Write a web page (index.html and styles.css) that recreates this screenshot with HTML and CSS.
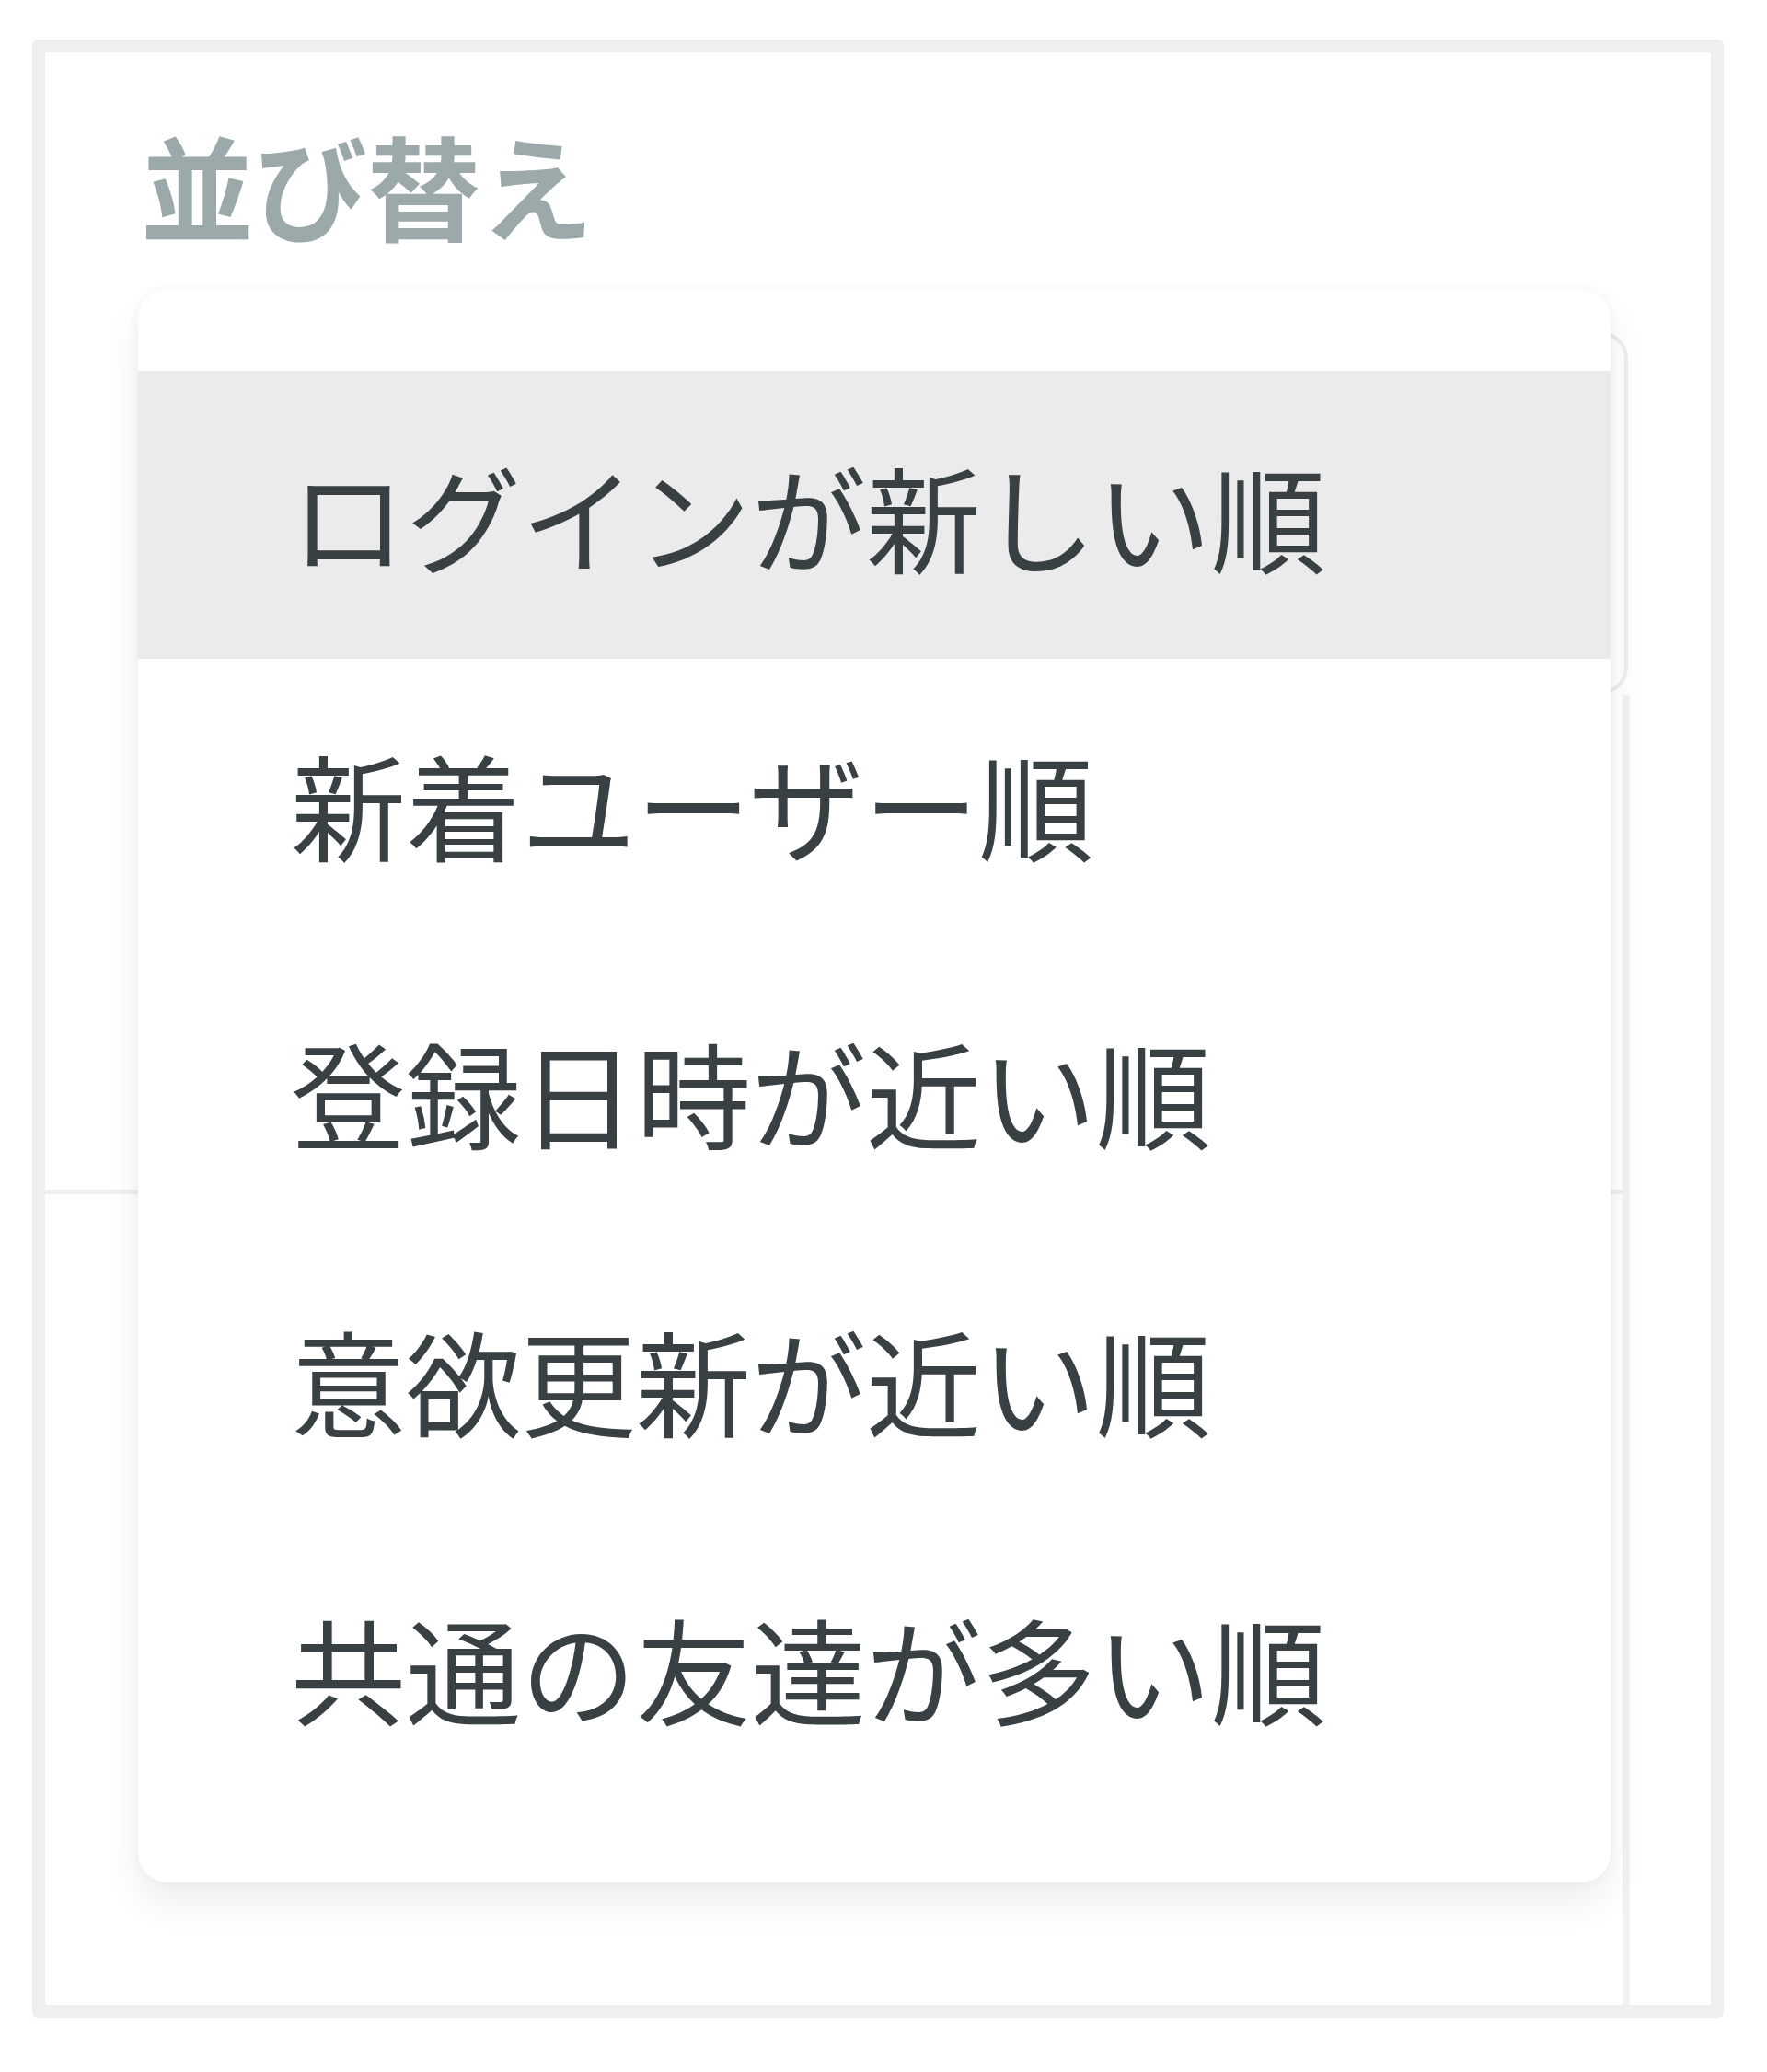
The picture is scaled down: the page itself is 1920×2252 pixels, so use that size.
FILE: index.html
```html
<!DOCTYPE html>
<html lang="ja">
<head>
    <meta charset="UTF-8">
    <meta name="viewport" content="width=device-width, initial-scale=1.0">
    <title>並び替え</title>
    <link rel="stylesheet" href="styles.css">
</head>
<body>
    <div class="frame">
        <div class="head">
            <h2 class="title">並び替え</h2>
            <div class="select"></div>
        </div>
        <div class="list">
            <div class="row"></div>
            <div class="row row-last"></div>
        </div>

        <ul class="menu">
            <li class="item selected">ログインが新しい順</li>
            <li class="item">新着ユーザー順</li>
            <li class="item">登録日時が近い順</li>
            <li class="item">意欲更新が近い順</li>
            <li class="item">共通の友達が多い順</li>
        </ul>
    </div>
</body>
</html>
```

FILE: styles.css
```css
body {
    margin: 0;
    padding: 0;
    background: #fff;
    font-family: "Noto Sans CJK JP", "Noto Sans", sans-serif;
}

.frame {
    position: relative;
    box-sizing: border-box;
    margin: 43px 0 0 35px;
    width: 1838px;
    height: 2150px;
    border: 14px solid #efefef;
    border-radius: 6px;
    display: flex;
    flex-direction: column;
}

.head {
    padding: 69px 90px 0 101px;
}

.title {
    margin: 0 0 0 3px;
    font-size: 123px;
    line-height: 146px;
    font-weight: 700;
    color: #9ba9ab;
}

.select {
    box-sizing: border-box;
    margin-top: 88px;
    height: 395px;
    border: 4px solid #eeeeee;
    border-radius: 30px;
}

.list {
    flex: 1;
    margin-right: 88px;
    border-right: 8px solid #f2f2f2;
}

.row {
    height: 538px;
    border-bottom: 5px solid #efefef;
}

.row-last {
    border-bottom: none;
}

.menu {
    position: absolute;
    left: 101px;
    top: 258px;
    width: 1600px;
    margin: 0;
    padding: 88px 0 78px;
    list-style: none;
    background: #fff;
    border-radius: 32px;
    box-shadow: 0 22px 40px rgba(0, 0, 0, 0.07), 0 0 14px rgba(0, 0, 0, 0.04);
}

.item {
    height: 313px;
    display: flex;
    align-items: center;
    padding-left: 166px;
    font-size: 125px;
    color: #384043;
}

.item.selected {
    background-color: #ebebeb;
}
```
